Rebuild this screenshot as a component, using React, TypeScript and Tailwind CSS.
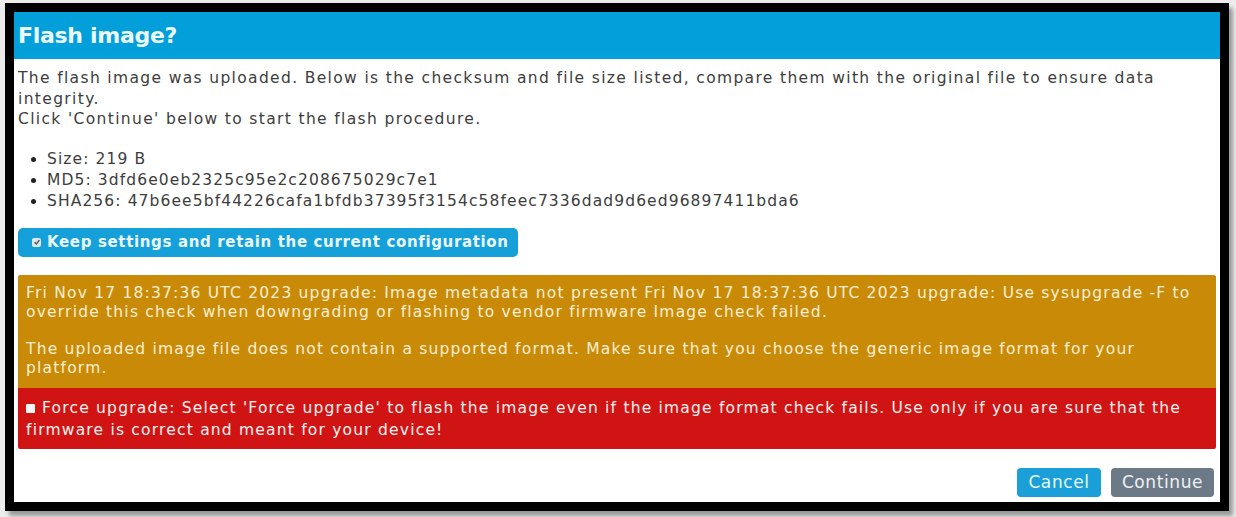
import React from 'react';

// Confirmation dialog shown after a firmware image upload.
const FONT = { fontFamily: '"DejaVu Sans", "Noto Sans", sans-serif' };

const CHECKSUMS = [
  'Size: 219 B',
  'MD5: 3dfd6e0eb2325c95e2c208675029c7e1',
  'SHA256: 47b6ee5bf44226cafa1bfdb37395f3154c58feec7336dad9d6ed96897411bda6',
];

function CheckMark() {
  return (
    <span className="flex h-[9px] w-[9px] shrink-0 items-center justify-center rounded-[2px] bg-[#dfe6ea]">
      <svg viewBox="0 0 10 10" className="h-[8px] w-[8px]">
        <path d="M2 5.2 L4.2 7.4 L8 2.6" fill="none" stroke="#4a5560" strokeWidth="1.8" />
      </svg>
    </span>
  );
}

export default function App() {
  return (
    <div className="h-[517px] w-full overflow-hidden bg-[#ececec] pl-[5px] pt-[3px]" style={FONT}>
      <div className="flex h-[508px] w-[1224px] flex-col border-[9px] border-black bg-white shadow-[4px_5px_4px_rgba(0,0,0,0.35)]">
        {/* ── Title bar ─────────────────────────────────────────── */}
        <div className="flex h-[47px] shrink-0 items-center bg-[#039fdb] px-[4px]">
          <h1 className="text-[22px] font-bold tracking-[-0.3px] text-[#ecfbff]">Flash image?</h1>
        </div>

        {/* ── Body ──────────────────────────────────────────────── */}
        <div className="flex flex-1 flex-col px-[4px] pt-[9px] text-[15.5px] leading-[20.5px] tracking-[1.2px] text-[#3d3d3d]">
          <p className="tracking-[1.35px]">
            The flash image was uploaded. Below is the checksum and file size listed, compare them with the original file to ensure data integrity.
            <br />
            Click 'Continue' below to start the flash procedure.
          </p>

          <ul className="mt-[19px] list-disc pl-[29px] leading-[21px] tracking-[1.1px] marker:text-[#222]">
            {CHECKSUMS.map((line) => (
              <li key={line}>{line}</li>
            ))}
          </ul>

          <div className="mt-[16px] flex">
            <label className="flex h-[29px] items-center gap-[6px] rounded-[5px] bg-[#16a0d9] pl-[14px] pr-[9px] text-[15px] font-semibold tracking-[0.65px] text-[#eaf8ff]">
              <CheckMark />
              Keep settings and retain the current configuration
            </label>
          </div>

          <div className="mt-[18px] h-[113px] overflow-hidden rounded-t-[2px] bg-[#c98a08] px-[8px] pt-[9px] text-[#fcefd2] leading-[19px]">
            <p>
              Fri Nov 17 18:37:36 UTC 2023 upgrade: Image metadata not present Fri Nov 17 18:37:36 UTC 2023 upgrade: Use sysupgrade -F to override this check when downgrading or flashing to vendor firmware Image check failed.
            </p>
            <p className="mt-[18px]">
              The uploaded image file does not contain a supported format. Make sure that you choose the generic image format for your platform.
            </p>
          </div>

          <div className="flex h-[61px] items-start rounded-b-[2px] bg-[#d01414] px-[8px] pt-[9px] leading-[22px] text-[#fff1f1]">
            <p>
              <span className="mr-[7px] inline-block h-[9px] w-[9px] rounded-[1px] bg-[#f5f5f5] align-[0px]" />
              Force upgrade: Select 'Force upgrade' to flash the image even if the image format check fails. Use only if you are sure that the firmware is correct and meant for your device!
            </p>
          </div>

          {/* ── Actions ─────────────────────────────────────────── */}
          <div className="mt-[19px] flex justify-end gap-[10px] pr-[2px]">
            <button className="h-[29px] w-[84px] rounded-[4px] bg-[#1a9fd9] text-[17px] tracking-[0.6px] text-[#e4fbff]">Cancel</button>
            <button className="h-[29px] w-[103px] rounded-[4px] bg-[#6c7a88] text-[17px] tracking-[0.6px] text-[#eef0f2]">Continue</button>
          </div>
        </div>
      </div>
    </div>
  );
}
